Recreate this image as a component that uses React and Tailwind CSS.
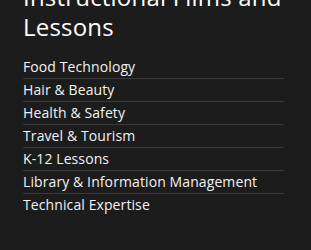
import React from 'react';

const categories = [
  'Food Technology',
  'Hair & Beauty',
  'Health & Safety',
  'Travel & Tourism',
  'K-12 Lessons',
  'Library & Information Management',
  'Technical Expertise',
];

const App = () => {
  return (
    <div className="min-h-screen w-full bg-[#1c1c1c] overflow-hidden" style={{ fontFamily: '"Open Sans", sans-serif' }}>
      <div className="mt-[-18px] pl-[23px] pr-[27px]">
        <h2 className="text-[24px] leading-[30px] text-white font-normal tracking-[0.2px]">
          Instructional Films and Lessons
        </h2>
        <ul className="mt-[14px]">
          {categories.map((c, i) => (
            <li
              key={c}
              className={`py-px text-[14px] leading-5 font-medium tracking-[0.1px] text-[#f2f2f2] ${i < categories.length - 1 ? 'border-b border-[#3a3a3a]' : ''}`}
            >
              {c}
            </li>
          ))}
        </ul>
      </div>
    </div>
  );
};

export default App;
